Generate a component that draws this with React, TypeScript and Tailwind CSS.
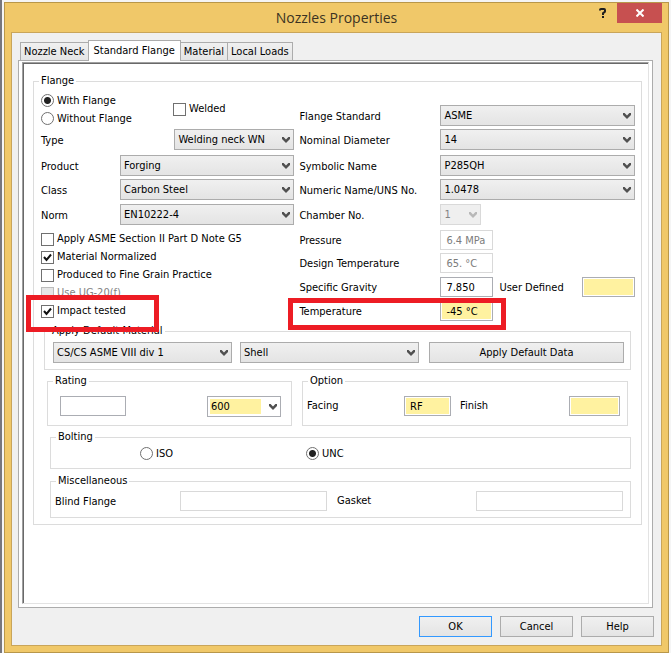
import type { ComponentProps, ReactNode } from 'react'
import clsx from 'clsx'

function Chevron() {
  return (
    <svg
      viewBox="0 0 8 6"
      className="pointer-events-none absolute top-1/2 right-1 h-1.5 w-2 -translate-y-1/2"
      fill="currentColor"
      aria-hidden="true"
    >
      <path d="M0 0h1.6L4 2.4 6.4 0H8v2L4 6 0 2z" />
    </svg>
  )
}

interface SelectProps extends ComponentProps<'select'> {
  options: string[]
  editable?: boolean
}

function Select({ options, editable, className, ...props }: SelectProps) {
  return (
    <span
      className={clsx(
        'relative block h-[21px]',
        props.disabled ? 'text-[#b8b8b8]' : 'text-[#505050]',
        className,
      )}
    >
      <select
        className={clsx(
          'block h-full w-full appearance-none border pr-4 pl-[3px] text-black disabled:border-[#d9d9d9] disabled:bg-[#efefef] disabled:bg-none disabled:text-[#838383]',
          editable
            ? 'border-[#abadb3] bg-white bg-[linear-gradient(#fff2a0,#fff2a0)] bg-[length:51px_15px] bg-[position:2px_2px] bg-no-repeat'
            : 'border-[#acacac] bg-linear-to-b from-[#f0f0f0] to-[#e4e4e4]',
        )}
        {...props}
      >
        {options.map((option) => (
          <option key={option}>{option}</option>
        ))}
      </select>
      <Chevron />
    </span>
  )
}

interface TextBoxProps extends ComponentProps<'input'> {
  tone?: 'plain' | 'yellow' | 'faint'
}

function TextBox({ tone = 'plain', className, ...props }: TextBoxProps) {
  return (
    <input
      type="text"
      className={clsx(
        'block h-5 border px-[5px] disabled:border-[#d9d9d9] disabled:text-[#7c7c7c]',
        tone === 'plain' && 'border-[#abadb3] bg-white',
        tone === 'faint' && 'border-[#d9d9d9] bg-white',
        tone === 'yellow' &&
          'border-[#abadb3] bg-[#fff2a0] shadow-[inset_0_0_0_1px_white]',
        className,
      )}
      {...props}
    />
  )
}

function Radio({ label, ...props }: ComponentProps<'input'> & { label: string }) {
  return (
    <label className="flex h-[18px] items-center gap-[3px]">
      <input
        type="radio"
        className="size-[13px] appearance-none rounded-full border border-[#707070] bg-white checked:bg-[radial-gradient(circle,#222_3px,#fff_4px)]"
        {...props}
      />
      <span className="pt-0.5">{label}</span>
    </label>
  )
}

function Checkbox({
  label,
  ...props
}: ComponentProps<'input'> & { label: string }) {
  return (
    <label
      className={clsx(
        'flex h-[18px] items-center gap-[3px]',
        props.disabled && 'text-[#838383]',
      )}
    >
      <span className="relative block size-[13px]">
        <input
          type="checkbox"
          className="peer block size-[13px] appearance-none border border-[#707070] bg-white disabled:border-[#bcbcbc] disabled:bg-[#e6e6e6]"
          {...props}
        />
        <svg
          viewBox="0 0 13 13"
          className="pointer-events-none absolute inset-0 hidden size-[13px] peer-checked:block"
          aria-hidden="true"
        >
          <path
            d="M3 6l2.5 3L10 3.5"
            fill="none"
            stroke="#111"
            strokeWidth="2"
          />
        </svg>
      </span>
      {label}
    </label>
  )
}

interface GroupProps {
  title: string
  className?: string
  children: ReactNode
}

function Group({ title, className, children }: GroupProps) {
  return (
    <fieldset className={clsx('min-w-0 border border-[#dcdcdc] px-[7px]', className)}>
      <legend className="-ml-0.5 h-3.5 bg-white px-0.5">{title}</legend>
      {children}
    </fieldset>
  )
}

interface RowProps {
  label: string
  htmlFor: string
  wide?: boolean
  className?: string
  children: ReactNode
}

function Row({ label, htmlFor, wide, className, children }: RowProps) {
  return (
    <div className={clsx('relative flex items-center', className)}>
      <label
        htmlFor={htmlFor}
        className={clsx('shrink-0 pt-0.5', wide ? 'w-[141px]' : 'w-[79px]')}
      >
        {label}
      </label>
      {children}
    </div>
  )
}

function TitleBar() {
  return (
    <header className="relative flex h-[29px] items-center justify-center">
      <h1 className="font-['Open_Sans','Noto_Sans',sans-serif] text-[14px] leading-5 text-[#3a3222]">
        Nozzles Properties
      </h1>
      <div className="absolute top-0 right-1.5 flex">
        <button
          type="button"
          aria-label="Help"
          className="flex h-5 w-[28px] items-center justify-center"
        >
          <svg viewBox="0 0 8 10" className="h-2.5 w-2" aria-hidden="true">
            <path
              d="M1 2.6V2q0-1 1-1h3q1 0 1 1v1.2q0 .6-.5 1L4 5.2V7"
              fill="none"
              stroke="#1e1e1e"
              strokeWidth="2"
            />
            <path d="M3 8h2v2H3z" fill="#1e1e1e" />
          </svg>
        </button>
        <button
          type="button"
          aria-label="Close"
          className="flex h-5 w-[45px] items-center justify-center bg-[#c75050]"
        >
          <svg viewBox="0 0 8 8" className="size-2" aria-hidden="true">
            <path d="M.5.5l7 7M7.5.5l-7 7" stroke="#fff" strokeWidth="2" />
          </svg>
        </button>
      </div>
    </header>
  )
}

const tabs = ['Nozzle Neck', 'Standard Flange', 'Material', 'Local Loads']

function Tabs() {
  return (
    <div role="tablist" className="flex items-end pl-0.5">
      {tabs.map((tab) => {
        const active = tab === 'Standard Flange'

        return (
          <button
            key={tab}
            type="button"
            role="tab"
            aria-selected={active}
            className={clsx(
              'border border-b-0 border-[#acacac] whitespace-nowrap',
              active
                ? 'relative z-10 -mb-px -ml-px h-[21px] bg-white px-[5px]'
                : '-ml-px h-[18px] bg-linear-to-b from-[#f0f0f0] to-[#e5e5e5] px-[3px] first:ml-0',
            )}
          >
            {tab}
          </button>
        )
      })}
    </div>
  )
}

function FlangeDetails() {
  return (
    <div className="-mr-px grid grid-cols-[253fr_335fr] gap-[5px]">
      <div className="pt-[3px]">
        <div className="flex items-center">
          <div className="w-[132px]">
            <Radio name="flange" label="With Flange" defaultChecked />
            <Radio name="flange" label="Without Flange" />
          </div>
          <Checkbox label="Welded" />
        </div>

        <Row label="Type" htmlFor="type" className="mt-0.5 justify-between">
          <Select id="type" className="w-[120px]" options={['Welding neck WN']} />
        </Row>
        <Row label="Product" htmlFor="product" className="mt-[5px]">
          <Select id="product" className="flex-1" options={['Forging']} />
        </Row>
        <Row label="Class" htmlFor="class" className="mt-[3px]">
          <Select id="class" className="flex-1" options={['Carbon Steel']} />
        </Row>
        <Row label="Norm" htmlFor="norm" className="mt-1">
          <Select id="norm" className="flex-1" options={['EN10222-4']} />
        </Row>

        <div className="mt-[5px]">
          <Checkbox label="Apply ASME Section II Part D Note G5" />
          <Checkbox label="Material Normalized" defaultChecked />
          <Checkbox label="Produced to Fine Grain Practice" />
          <Checkbox label="Use UG-20(f)" disabled />
          <div className="relative">
            <Checkbox label="Impact tested" defaultChecked />
            <Highlight className="-top-[7px] -left-[15px] h-[37px] w-[133px]" />
          </div>
        </div>
      </div>

      <div className="pt-[17px]">
        <Row wide label="Flange Standard" htmlFor="standard">
          <Select id="standard" className="flex-1" options={['ASME']} />
        </Row>
        <Row wide label="Nominal Diameter" htmlFor="diameter" className="mt-[3px]">
          <Select id="diameter" className="flex-1" options={['14']} />
        </Row>
        <Row wide label="Symbolic Name" htmlFor="symbolic" className="mt-[5px]">
          <Select id="symbolic" className="flex-1" options={['P285QH']} />
        </Row>
        <Row wide label="Numeric Name/UNS No." htmlFor="numeric" className="mt-[3px]">
          <Select id="numeric" className="flex-1" options={['1.0478']} />
        </Row>
        <Row wide label="Chamber No." htmlFor="chamber" className="mt-1">
          <Select id="chamber" className="w-[41px]" options={['1']} disabled />
        </Row>
        <Row wide label="Pressure" htmlFor="pressure" className="mt-[5px]">
          <TextBox id="pressure" className="w-[53px]" defaultValue="6.4 MPa" disabled />
        </Row>
        <Row wide label="Design Temperature" htmlFor="design" className="mt-[3px]">
          <TextBox id="design" className="w-[53px]" defaultValue="65. °C" disabled />
        </Row>
        <Row wide label="Specific Gravity" htmlFor="gravity" className="mt-1">
          <TextBox id="gravity" className="w-[53px]" defaultValue="7.850" />
          <label htmlFor="user-defined" className="mr-auto ml-1.5 pt-0.5">
            User Defined
          </label>
          <TextBox id="user-defined" tone="yellow" className="w-[53px]" />
        </Row>
        <Row wide label="Temperature" htmlFor="temperature" className="mt-1">
          <TextBox
            id="temperature"
            tone="yellow"
            className="w-[53px]"
            defaultValue="-45 °C"
          />
          <Highlight className="-top-[3px] -left-[11px] h-8 w-[218px]" />
        </Row>
      </div>
    </div>
  )
}

function Highlight({ className }: { className: string }) {
  return (
    <div
      className={clsx(
        'pointer-events-none absolute z-10 border-5 border-[#ed1c24]',
        className,
      )}
    />
  )
}

function PushButton({ className, ...props }: ComponentProps<'button'>) {
  return (
    <button
      type="button"
      className={clsx(
        'h-[21px] border bg-linear-to-b from-[#f0f0f0] to-[#e4e4e4]',
        className,
      )}
      {...props}
    />
  )
}

export default function App() {
  return (
    <div className="flex min-h-screen border-l-2 border-[#77777d] bg-[#f5f5f5] pt-0.5 pr-0.5 pl-0.5 font-['DejaVu_Sans_Condensed','DejaVu_Sans',sans-serif] text-[11px] leading-[14px] text-black">
      <main className="flex min-w-0 flex-1 flex-col border border-[#b8974a] bg-[#f0c869] px-1.5 pb-1.5">
        <div className="-mx-1.5">
          <TitleBar />
        </div>

        <div className="flex flex-1 flex-col border border-[#c9a55a] bg-[#f0f0f0] pt-[7px] pr-[7px] pb-2 pl-1.5">
          <Tabs />

          <div className="mr-px flex flex-1 flex-col border border-[#acacac] bg-white p-[3px] pt-px">
            <div className="flex-1 border border-t-[#a0a0a0] border-r-[#e3e3e3] border-b-[#e3e3e3] border-l-[#a0a0a0]">
              <div className="h-full border-t border-l border-[#696969] pt-2.5 pr-1.5 pl-[9px]">
                <Group title="Flange" className="pb-1.5">
                  <FlangeDetails />

                  <Group
                    title="Apply Default Material"
                    className="mx-[3px] mt-[3px] pb-1.5"
                  >
                    <div className="-mr-px flex gap-2 pt-1 pl-px">
                      <Select
                        aria-label="Default material"
                        className="flex-[179]"
                        options={['CS/CS ASME VIII div 1']}
                      />
                      <Select
                        aria-label="Component"
                        className="flex-[179]"
                        options={['Shell']}
                      />
                      <PushButton className="ml-0.5 flex-[193] border-[#acacac]">
                        Apply Default Data
                      </PushButton>
                    </div>
                  </Group>

                  <div className="mx-1.5 mt-1 grid grid-cols-[245fr_326fr] gap-2.5">
                    <Group title="Rating" className="pb-2">
                      <div className="flex justify-between pt-2 pr-[3px] pl-[5px]">
                        <TextBox aria-label="Rating" className="w-[66px]" />
                        <Select
                          aria-label="Rating class"
                          editable
                          className="w-[74px]"
                          options={['600']}
                        />
                      </div>
                    </Group>

                    <Group title="Option" className="pb-2">
                      <div className="-ml-[3px] flex items-center pt-2">
                        <label htmlFor="facing" className="w-[97px]">
                          Facing
                        </label>
                        <TextBox
                          id="facing"
                          tone="yellow"
                          className="w-[47px]"
                          defaultValue="RF"
                        />
                        <label htmlFor="finish" className="mr-auto ml-[9px]">
                          Finish
                        </label>
                        <TextBox id="finish" tone="yellow" className="w-[51px]" />
                      </div>
                    </Group>
                  </div>

                  <Group title="Bolting" className="mt-1 mr-[3px] ml-[9px] pb-1.5">
                    <div className="grid grid-cols-[166fr_317fr] pl-[82px]">
                      <Radio name="bolting" label="ISO" />
                      <Radio name="bolting" label="UNC" defaultChecked />
                    </div>
                  </Group>

                  <Group title="Miscellaneous" className="mt-[5px] mr-[3px] ml-[9px] pb-1.5">
                    <div className="-ml-[3px] flex items-center pt-[3px]">
                      <label htmlFor="blind" className="w-[125px] pt-0.5">
                        Blind Flange
                      </label>
                      <TextBox id="blind" tone="faint" className="w-[147px] min-w-0" />
                      <label htmlFor="gasket" className="mr-auto ml-2.5">
                        Gasket
                      </label>
                      <TextBox id="gasket" tone="faint" className="w-[147px] min-w-0" />
                    </div>
                  </Group>
                </Group>
              </div>
            </div>
          </div>

          <footer className="flex justify-end gap-2 pt-2">
            <PushButton className="w-[73px] border-[#3399ff]">OK</PushButton>
            <PushButton className="w-[73px] border-[#acacac]">Cancel</PushButton>
            <PushButton className="w-[73px] border-[#acacac]">Help</PushButton>
          </footer>
        </div>
      </main>
    </div>
  )
}
